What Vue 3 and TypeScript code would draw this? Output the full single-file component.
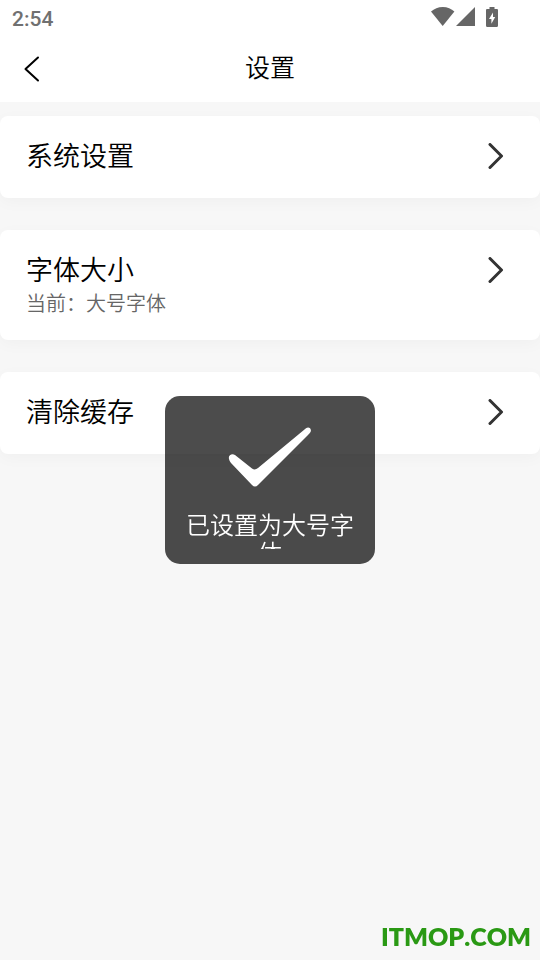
<script setup lang="ts">
import { ref } from 'vue'

interface SettingItem {
  id: string
  title: string
  note?: string
}

const items: SettingItem[] = [
  { id: 'system', title: '系统设置' },
  { id: 'font', title: '字体大小', note: '当前：大号字体' },
  { id: 'cache', title: '清除缓存' },
]

const toast = ref('已设置为大号字体')
</script>

<template>
  <div class="screen">
    <div class="status">
      <span class="time">2:54</span>
      <div class="indicators">
        <svg class="wifi" viewBox="0 0 24 20" aria-hidden="true">
          <path d="M0 4.6C3.2 1.8 7.2 0 11.8 0s8.6 1.8 11.6 4.6L11.7 19z" />
        </svg>
        <svg class="signal" viewBox="0 0 20 20" aria-hidden="true">
          <path d="M19 0v19H0z" />
        </svg>
        <svg class="battery" viewBox="0 0 12 20" aria-hidden="true">
          <path
            fill-rule="evenodd"
            d="M3.5 0h5v2h2.2c.8 0 1.3.5 1.3 1.3v15.2c0 .8-.5 1.5-1.3 1.5H1.3C.5 20 0 19.3 0 18.5V3.3C0 2.5.5 2 1.3 2h2.2zM7 5.5 3 12h2.4v4.8L9.2 10H7z"
          />
        </svg>
      </div>
    </div>
    <header class="nav">
      <button class="back" type="button" aria-label="返回">
        <svg viewBox="0 0 16 26" aria-hidden="true"><path d="M14 1.5 1.5 13 14 24.5" /></svg>
      </button>
      <h1>设置</h1>
    </header>
    <main class="list">
      <button v-for="item in items" :key="item.id" class="card" type="button">
        <span class="row">
          <span class="title">{{ item.title }}</span>
          <svg class="chevron" viewBox="0 0 16 26" aria-hidden="true"><path d="M2 1.5 13.5 13 2 24.5" /></svg>
        </span>
        <span v-if="item.note" class="note">{{ item.note }}</span>
      </button>
    </main>
    <div class="toast" role="status">
      <svg class="check" viewBox="0 0 84 60" aria-hidden="true">
        <path
          d="M1 32C0 28 4 26 7 28L24 41.5Q27 43.5 30 41L78 1.2C81-.8 84 2 82.5 5Q82 6 80 8L30 58Q27 61 24 58L3 36Q1.5 34.5 1 32Z"
        />
      </svg>
      <p>{{ toast }}</p>
    </div>
    <div class="watermark">ITMOP.COM</div>
  </div>
</template>

<style>
body {
  background: #f7f7f7;
}
</style>

<style scoped>
.screen {
  position: relative;
  min-height: 100vh;
  background: #f7f7f7;
  color: #000;
  font-family: Roboto, 'Noto Sans CJK SC', sans-serif;
  font-weight: 350;
}
.status {
  display: flex;
  align-items: center;
  justify-content: space-between;
  height: 38px;
  padding: 0 42px 0 12px;
  box-sizing: border-box;
  background: #fff;
}
.time {
  color: #707070;
  font-size: 21px;
  font-weight: 500;
  line-height: 38px;
}
.indicators {
  display: flex;
  align-items: center;
  padding-bottom: 4px;
  fill: #666;
}
.wifi {
  width: 24px;
  height: 20px;
}
.signal {
  width: 20px;
  height: 20px;
  margin: 0 10px 0 1px;
}
.battery {
  width: 12px;
  height: 20px;
}
.nav {
  display: grid;
  grid-template-columns: 64px 1fr 64px;
  align-items: center;
  height: 64px;
  padding-bottom: 2px;
  box-sizing: border-box;
  background: #fff;
}
.back {
  display: flex;
  justify-content: center;
  padding: 0;
  border: 0;
  background: none;
}
.back svg,
.chevron {
  display: block;
  width: 16px;
  height: 26px;
  fill: none;
  stroke: #000;
  stroke-width: 2;
  stroke-linecap: round;
  stroke-linejoin: round;
}
h1 {
  margin: 0;
  font-size: 25px;
  font-weight: inherit;
  line-height: 36px;
  text-align: center;
}
.list {
  display: flex;
  flex-direction: column;
  gap: 32px;
  padding: 14px 0 32px;
}
.card {
  display: flex;
  flex-direction: column;
  width: 100%;
  padding: 20px 36px 22px 26px;
  border: 0;
  border-radius: 8px;
  background: #fff;
  box-shadow: 0 4px 16px rgba(0, 0, 0, 0.03);
  color: #000;
  font: inherit;
  text-align: left;
}
.row {
  display: flex;
  align-items: center;
  justify-content: space-between;
  width: 100%;
}
.title {
  padding-top: 2px;
  font-size: 27px;
  line-height: 38px;
}
.chevron {
  stroke: #333;
  stroke-width: 3;
}
.note {
  color: #666;
  font-size: 20px;
  line-height: 28px;
}
.toast {
  position: fixed;
  top: 50%;
  left: 50%;
  display: flex;
  flex-direction: column;
  align-items: center;
  width: 210px;
  height: 168px;
  padding: 31px 20px 15px;
  box-sizing: border-box;
  border-radius: 15px;
  background: rgba(0, 0, 0, 0.7);
  color: #fff;
  transform: translate(-50%, -50%);
}
.check {
  flex: none;
  width: 84px;
  height: 60px;
  margin-bottom: 25px;
  fill: #fff;
}
.toast p {
  flex: 1;
  min-height: 0;
  margin: 0;
  overflow: hidden;
  font-size: 24px;
  line-height: 28px;
  text-align: center;
}
.watermark {
  position: fixed;
  right: 9px;
  bottom: 7px;
  color: #2a9914;
  font-family: Lato, 'Open Sans', sans-serif;
  font-size: 25px;
  font-weight: 800;
  font-kerning: none;
  line-height: 34px;
}
</style>
